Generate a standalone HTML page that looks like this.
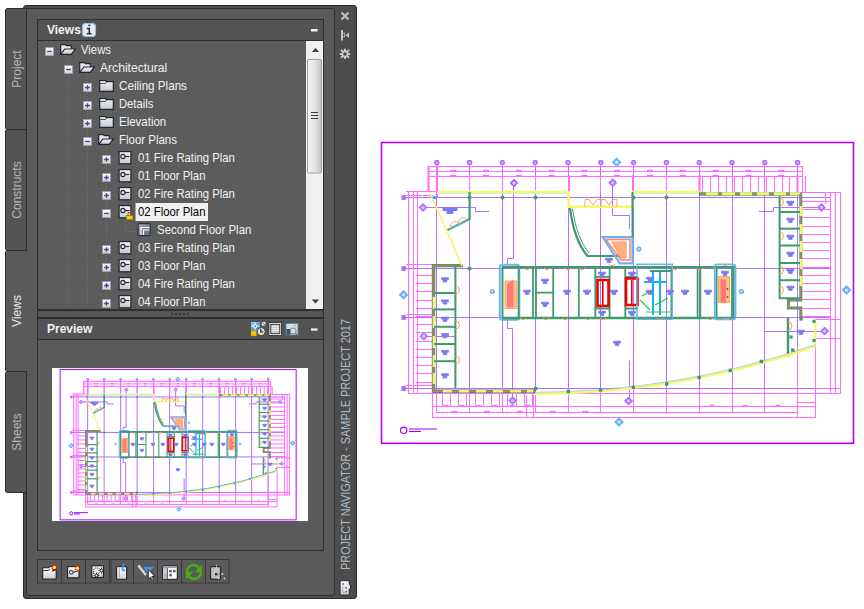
<!DOCTYPE html>
<html><head><meta charset="utf-8">
<style>
*{margin:0;padding:0;box-sizing:border-box}
html,body{width:864px;height:609px;background:#fff;overflow:hidden;position:relative;font-family:"Liberation Sans",sans-serif}
.a{position:absolute}
#frame{left:23px;top:5px;width:334px;height:594px;background:#4d4d4d;border:1px solid #2c2c2c;border-radius:3px}
.tab{left:5px;width:22px;background:#545454;border:1px solid #2e2e2e;border-right:none;clip-path:polygon(2px 0,100% 0,100% 100%,2px 100%,0 calc(100% - 2px),0 2px)}
.tab span{position:absolute;left:50%;top:50%;transform:translate(-50%,-50%) rotate(-90deg);color:#b4b4b4;font-size:12px;white-space:nowrap}
#inner{left:26px;top:8px;width:309px;height:588px;background:#5a5a5a;border:1px solid #2e2e2e;border-radius:3px}
.hdr{background:#535353;border:1px solid #2e2e2e;color:#f2f2f2;font-weight:bold;font-size:12px}
#tree{left:37px;top:41px;width:287px;height:269px;background:#5c5c5c;border:1px solid #2e2e2e;border-top:none;overflow:hidden}
</style></head><body>
<div class="a" id="frame"></div>
<div class="a tab" style="top:8px;height:122px"><span>Project</span></div>
<div class="a tab" style="top:129px;height:122px"><span>Constructs</span></div>
<div class="a tab" style="top:371px;height:122px"><span>Sheets</span></div>
<div class="a" id="inner"></div>
<div class="a tab" style="top:250px;height:122px;background:#5a5a5a;width:22px"><span style="color:#e8e8e8">Views</span></div>
<div class="a" style="left:26px;top:251px;width:2px;height:120px;background:#5a5a5a"></div>
<div class="a hdr" style="left:37px;top:19px;width:287px;height:22px"><span class="a" style="left:9px;top:3px">Views</span></div>
<div class="a" id="tree"></div>
<div class="a" style="left:37px;top:309px;width:287px;height:10px;background:#555;border:1px solid #2e2e2e;border-width:2px 1px 2px 1px"></div>
<div class="a hdr" style="left:37px;top:318px;width:287px;height:22px"><span class="a" style="left:9px;top:3px">Preview</span></div>
<div class="a" style="left:37px;top:339px;width:287px;height:212px;border:1px solid #2e2e2e;border-top:none"></div>
<svg class="a" style="left:0;top:0" width="864" height="609" font-family="Liberation Sans" font-size="12" fill="#f2f2f2">
<defs>
<linearGradient id="gx" x1="0" y1="0" x2="0" y2="1"><stop offset="0" stop-color="#fbfbfb"/><stop offset="1" stop-color="#d2d2d2"/></linearGradient>
<linearGradient id="gf" x1="0" y1="0" x2="0" y2="1"><stop offset="0" stop-color="#f4f5f8"/><stop offset="1" stop-color="#c4c8d2"/></linearGradient>
<linearGradient id="gp" x1="0" y1="0" x2="1" y2="1"><stop offset="0" stop-color="#a9b0bc"/><stop offset="1" stop-color="#5d6572"/></linearGradient>
<clipPath id="ctree"><rect x="38" y="41" width="268" height="268"/></clipPath>
<g id="xp"><rect x="0.5" y="0.5" width="8" height="8" fill="url(#gx)" stroke="#a0a0a0"/><path d="M2.2,4.5H6.8M4.5,2.2V6.8" stroke="#2c47a8" stroke-width="1.3"/></g>
<g id="xm"><rect x="0.5" y="0.5" width="8" height="8" fill="url(#gx)" stroke="#a0a0a0"/><path d="M2.2,4.5H6.8" stroke="#2c47a8" stroke-width="1.3"/></g>
<g id="fo"><path d="M0.7,10.3V0.7H5.3L6.3,1.7H11.3V4.3" fill="#e6e8ee" stroke="#23262c" stroke-width="1.2"/><path d="M0.7,10.3L4.8,5H15.3L11.2,10.3Z" fill="url(#gf)" stroke="#23262c" stroke-width="1.2"/></g>
<g id="fc"><path d="M0.7,11.3V0.7H6.3L7.3,1.7H14.3V11.3Z" fill="url(#gf)" stroke="#23262c" stroke-width="1.2"/><path d="M1.3,3.3H6.5L7.5,2.5" stroke="#23262c" stroke-width="1" fill="none"/><path d="M1.5,2H6" stroke="#fff" stroke-width="1"/></g>
<g id="vw"><rect x="0.6" y="0.6" width="11.8" height="12.2" fill="url(#gf)" stroke="#23262c" stroke-width="1.2"/><circle cx="4.4" cy="5.5" r="2.1" fill="none" stroke="#23262c" stroke-width="1.1"/><path d="M6.5,5.5H10.8" stroke="#23262c" stroke-width="1.1"/></g>
<g id="lk"><path d="M2,4V2.5A1.6,1.6 0 0 1 5.2,2.5V4" fill="none" stroke="#8a6d2c" stroke-width="1.1"/><rect x="0.5" y="4" width="6.4" height="4.2" fill="#f1d21a" stroke="#9a7a10" stroke-width="0.8"/></g>
<g id="pl"><rect x="0.6" y="0.6" width="12.2" height="12" rx="1" fill="url(#gp)" stroke="#2c3038" stroke-width="1.1"/><path d="M3.5,12V4.5H12M6,12V7H12" stroke="#fff" stroke-width="1.1" fill="none"/></g>
</defs>

<g clip-path="url(#ctree)">
<path d="M68.5,57V310 M87.5,75V310 M106.5,147V310 M125.5,222V231.5H137 M54.5,51.5H60 M73.5,69.5H79 M92.5,87.5H98 M92.5,105.5H98 M92.5,123.5H98 M92.5,141.5H98 M111.5,159.5H117 M111.5,177.5H117 M111.5,195.5H117 M111.5,213.5H117 M111.5,249.5H117 M111.5,267.5H117 M111.5,285.5H117 M111.5,303.5H117" stroke="#767676" stroke-width="1" stroke-dasharray="1 2" fill="none"/>
<use href="#xm" x="45" y="47.0"/>
<use href="#fo" x="60" y="44.0"/>
<text transform="translate(81,54.0) scale(0.944,1)">Views</text>
<use href="#xm" x="64" y="65.0"/>
<use href="#fo" x="79" y="62.0"/>
<text transform="translate(100,72.0) scale(1.01,1)">Architectural</text>
<use href="#xp" x="83" y="83.0"/>
<use href="#fc" x="99" y="80.0"/>
<text transform="translate(119,90.0) scale(0.971,1)">Ceiling Plans</text>
<use href="#xp" x="83" y="101.0"/>
<use href="#fc" x="99" y="98.0"/>
<text transform="translate(119,108.0) scale(0.934,1)">Details</text>
<use href="#xp" x="83" y="119.0"/>
<use href="#fc" x="99" y="116.0"/>
<text transform="translate(119,126.0) scale(0.957,1)">Elevation</text>
<use href="#xm" x="83" y="137.0"/>
<use href="#fo" x="98" y="134.0"/>
<text transform="translate(119,144.0) scale(0.956,1)">Floor Plans</text>
<use href="#xp" x="102" y="155.0"/>
<use href="#vw" x="118.5" y="151.0"/>
<text transform="translate(138,162.0) scale(0.945,1)">01 Fire Rating Plan</text>
<use href="#xp" x="102" y="173.0"/>
<use href="#vw" x="118.5" y="169.0"/>
<text transform="translate(138,180.0) scale(0.946,1)">01 Floor Plan</text>
<use href="#xp" x="102" y="191.0"/>
<use href="#vw" x="118.5" y="187.0"/>
<text transform="translate(138,198.0) scale(0.945,1)">02 Fire Rating Plan</text>
<use href="#xm" x="102" y="209.0"/>
<use href="#vw" x="118.5" y="205.0"/>
<use href="#lk" x="126" y="211.5"/>
<rect x="135.5" y="203" width="72.5" height="18" fill="#f0f0f0"/>
<text transform="translate(138,216.0) scale(0.946,1)" fill="#000">02 Floor Plan</text>
<use href="#pl" x="137.5" y="223.0"/>
<text transform="translate(157,234.0) scale(0.957,1)">Second Floor Plan</text>
<use href="#xp" x="102" y="245.0"/>
<use href="#vw" x="118.5" y="241.0"/>
<text transform="translate(138,252.0) scale(0.945,1)">03 Fire Rating Plan</text>
<use href="#xp" x="102" y="263.0"/>
<use href="#vw" x="118.5" y="259.0"/>
<text transform="translate(138,270.0) scale(0.946,1)">03 Floor Plan</text>
<use href="#xp" x="102" y="281.0"/>
<use href="#vw" x="118.5" y="277.0"/>
<text transform="translate(138,288.0) scale(0.945,1)">04 Fire Rating Plan</text>
<use href="#xp" x="102" y="299.0"/>
<use href="#vw" x="118.5" y="295.0"/>
<text transform="translate(138,306.0) scale(0.946,1)">04 Floor Plan</text>
</g>
<!-- info icon -->
<rect x="82.5" y="23.5" width="13" height="13" rx="3" fill="#e8ecf2" stroke="#8cc0ee" stroke-width="1.2"/>
<path d="M86.8,28.6H89.3V33.4M86.6,33.7H91.6" stroke="#2a2a2a" stroke-width="1.5" fill="none"/><rect x="88.4" y="24.6" width="1.8" height="1.7" fill="#2a2a2a"/>
<!-- header minimize -->
<rect x="311" y="29" width="6.5" height="2.5" fill="#f0f0f0"/>
<rect x="311" y="328.4" width="6.5" height="2.2" fill="#f0f0f0"/>
<!-- scrollbar -->
<rect x="306" y="41" width="17" height="268" fill="#f0f0f0"/>
<path d="M311.8,52L315.5,48L319.2,52Z" fill="#404040"/>
<path d="M311.8,299.5L315.5,303.5L319.2,299.5Z" fill="#404040"/>
<linearGradient id="gth" x1="0" x2="1"><stop offset="0" stop-color="#f4f4f4"/><stop offset="0.5" stop-color="#e6e6e6"/><stop offset="1" stop-color="#c2c2c2"/></linearGradient>
<rect x="307.5" y="59.5" width="14" height="113.5" rx="1.5" fill="url(#gth)" stroke="#a0a0a0"/>
<path d="M311,112.5H318M311,115.5H318M311,118.5H318" stroke="#3c3c3c" stroke-width="1"/>
<!-- splitter dots -->
<g fill="#333"><rect x="171" y="313" width="2" height="2"/><rect x="175" y="313" width="2" height="2"/><rect x="179" y="313" width="2" height="2"/><rect x="183" y="313" width="2" height="2"/><rect x="187" y="313" width="2" height="2"/></g>
<!-- right strip icons -->
<path d="M341.5,12.5L348.5,19.5M348.5,12.5L341.5,19.5" stroke="#c4c4c4" stroke-width="2"/>
<path d="M342,30V40.5" stroke="#c4c4c4" stroke-width="2"/><path d="M343,33.5L344.5,33V37L343,36.5" stroke="#c4c4c4" stroke-width="0.8" fill="none"/>
<path d="M349,32.5V38L345.5,35.2Z" fill="#c4c4c4"/>
<g stroke="#c8c8c8" stroke-width="2"><path d="M345,48.8V59M339.8,53.9H350.1M341,49.9L349,57.9M349,49.9L341,57.9"/></g>
<circle cx="345" cy="53.9" r="2.6" fill="#4d4d4d" stroke="#c8c8c8" stroke-width="1.7"/>
<text transform="translate(349.8,570) rotate(-90) scale(0.873,1)" fill="#aebac4" font-size="12.5">PROJECT NAVIGATOR - SAMPLE PROJECT 2017</text>

<!-- toolbar -->
<rect x="37.5" y="559.5" width="24" height="23.5" fill="none" stroke="#3a3a3a"/>
<rect x="61.5" y="559.5" width="24" height="23.5" fill="none" stroke="#3a3a3a"/>
<rect x="85.5" y="559.5" width="24" height="23.5" fill="none" stroke="#3a3a3a"/>
<rect x="111" y="559.5" width="22.5" height="23.5" fill="none" stroke="#3a3a3a"/>
<rect x="133.5" y="559.5" width="24" height="23.5" fill="none" stroke="#3a3a3a"/>
<rect x="157.5" y="559.5" width="24" height="23.5" fill="none" stroke="#3a3a3a"/>
<rect x="181.5" y="559.5" width="24" height="23.5" fill="none" stroke="#3a3a3a"/>
<rect x="205.5" y="559.5" width="23.5" height="23.5" fill="none" stroke="#3a3a3a"/>
<defs><linearGradient id="gi" x1="0" y1="0" x2="0" y2="1"><stop offset="0" stop-color="#ffffff"/><stop offset="1" stop-color="#cfd3dc"/></linearGradient>
<g id="star"><path d="M0,-3.8L0.9,-1.5L3.4,-2.2L1.8,0L3.4,2.2L0.9,1.5L0,3.8L-0.9,1.5L-3.4,2.2L-1.8,0L-3.4,-2.2L-0.9,-1.5Z" fill="#f02000"/><circle r="1.7" fill="#ffe060"/></g></defs>
<!-- b1 folder new -->
<path d="M42.7,579V567.8H48.5L49.5,566.8H53V571L56.2,569V579Z" fill="url(#gi)" stroke="#1e2024" stroke-width="1.1"/>
<path d="M43.2,570.5H48.2L50,569" stroke="#1e2024" stroke-width="0.9" fill="none"/>
<use href="#star" x="54.4" y="567.4"/>
<!-- b2 view new -->
<rect x="67.6" y="566.6" width="11.4" height="11.2" fill="url(#gi)" stroke="#1e2024" stroke-width="1.1"/>
<circle cx="71.3" cy="572.3" r="1.9" fill="#ddd" stroke="#23262c" stroke-width="1"/><path d="M73.2,572.3L77.5,571" stroke="#23262c" stroke-width="1"/>
<use href="#star" x="77.4" y="568.3"/>
<!-- b3 -->
<rect x="91.8" y="565.8" width="11.6" height="11.6" fill="url(#gi)" stroke="#1e2024" stroke-width="1.1"/>
<path d="M93.5,574V570A2,2 0 0 1 95.5,568H99M96,575H99" stroke="#333" stroke-width="0.9" stroke-dasharray="1.2 0.8" fill="none"/>
<g stroke="#222" stroke-width="0.9"><path d="M101.5,567.5V573.5M98.5,570.5H104.5M99.4,568.4L103.6,572.6M103.6,568.4L99.4,572.6"/><path d="M96.5,572.5V578.5M93.5,575.5H99.5M94.4,573.4L98.6,577.6M98.6,573.4L94.4,577.6"/></g>
<circle cx="101.5" cy="570.5" r="1" fill="#fff"/><circle cx="96.5" cy="575.5" r="1" fill="#fff"/>
<!-- b4 -->
<rect x="116.6" y="566.8" width="10" height="12.4" rx="0.5" fill="url(#gi)" stroke="#1e2024" stroke-width="1.1"/>
<path d="M119.5,567.5V579" stroke="#aaa" stroke-width="0.8"/><path d="M117.5,569H126" stroke="#bbb" stroke-width="0.6"/>
<path d="M125,564.5H122.8V570.5H125" stroke="#3c8ef0" stroke-width="1.4" fill="none"/>
<!-- b5 -->
<path d="M138.5,565.5L146,575" stroke="#f0f0f0" stroke-width="2.2"/><path d="M139.5,566L147,575.5" stroke="#888" stroke-width="0.6"/>
<path d="M143.5,567H154L148,573Z" fill="#4a90f0"/>
<path d="M148.3,569.5V579.2L150.5,577L152.3,580.2L153.6,579.5L151.8,576.4H154.8Z" fill="#fff" stroke="#111" stroke-width="0.8"/>
<!-- b6 -->
<rect x="162.7" y="565.7" width="14.6" height="13.6" rx="1" fill="#fff" stroke="#1e2024" stroke-width="1.1"/>
<rect x="163.3" y="566.3" width="13.4" height="1.6" fill="#8a94a6"/>
<rect x="163.5" y="568.3" width="3.6" height="10.5" fill="#b8bec8"/><path d="M167.4,568V579" stroke="#333" stroke-width="0.8"/>
<rect x="169.2" y="569.8" width="2.6" height="2.6" fill="#666"/><rect x="173" y="569.8" width="2.6" height="2.6" fill="#666"/><rect x="169.2" y="573.8" width="2.6" height="2.6" fill="#666"/>
<path d="M164.2,570.8H166.4M164.2,572.8H166.4" stroke="#fff" stroke-width="0.7"/>
<!-- b7 refresh -->
<path d="M187,572A6.5,6.5 0 0 1 199.5,569.2" stroke="#46ae10" stroke-width="2.6" fill="none"/>
<path d="M201.8,564.8V572.2H194.4Z" fill="#46ae10"/>
<path d="M200.8,572A6.5,6.5 0 0 1 188.3,574.8" stroke="#46ae10" stroke-width="2.6" fill="none"/>
<path d="M185.9,579.2V571.8H193.3Z" fill="#46ae10"/>
<!-- b8 -->
<rect x="210.6" y="566.6" width="9.8" height="12.5" rx="0.8" fill="#c4c4c4" stroke="#262626" stroke-width="1.1"/>
<path d="M213,567V579M216,567V579" stroke="#a8a8a8" stroke-width="0.6"/>
<path d="M216.5,564.6V569" stroke="#bbb" stroke-width="0.8" fill="none"/>
<rect x="215" y="573" width="2.4" height="2.4" fill="#333"/><path d="M217.5,574H221" stroke="#555" stroke-width="0.6"/>
<circle cx="222.4" cy="574" r="0.9" fill="#ddd"/><circle cx="224.4" cy="578.4" r="0.9" fill="#ddd"/><circle cx="218.4" cy="578.4" r="0.9" fill="#ddd"/>
<!-- bottom strip icon -->
<path d="M340.1,580.7H349.2V584.6H350.6V589H349.2V595H340.1Z" fill="url(#gi)" stroke="#262830" stroke-width="1"/>
<rect x="342.4" y="583.3" width="1.4" height="1.4" fill="#333"/><rect x="345.4" y="587.1" width="1.4" height="1.4" fill="#333"/><rect x="345.4" y="591.1" width="1.4" height="1.4" fill="#333"/>
<path d="M342.8,586V592.3H344.5" stroke="#777" stroke-width="0.5" fill="none"/>

<!-- preview header icons -->
<linearGradient id="gbl" x1="0" y1="0" x2="1" y2="1"><stop offset="0" stop-color="#9ccaf2"/><stop offset="1" stop-color="#2f78c4"/></linearGradient>
<rect x="251" y="322" width="9" height="8.5" fill="url(#gbl)"/>
<circle cx="255.2" cy="326.2" r="1.7" fill="none" stroke="#f4faff" stroke-width="1"/><path d="M251.5,326.2H253.5M257,326.2H259.5M255.2,322.5V324.5M255.2,328V330" stroke="#f4faff" stroke-width="0.9"/>
<rect x="251" y="330.5" width="5.5" height="5.5" fill="#f0c020" stroke="#b88a00" stroke-width="0.5"/>
<rect x="261.8" y="322" width="3.6" height="3.6" fill="#f2f2f2"/><path d="M262.3,322.5L265,325.2" stroke="#333" stroke-width="0.8"/>
<circle cx="261.2" cy="331.6" r="4" fill="#e6e6e6" stroke="#3a3a3a" stroke-width="0.9"/><path d="M260.8,329V332H263.4" stroke="#111" stroke-width="1.2" fill="none"/>
<rect x="269" y="322.5" width="12.5" height="13" fill="#fff" stroke="#2a2a2a" stroke-width="0.8"/><rect x="270.8" y="324.3" width="9" height="9.4" fill="#ccc" stroke="#333" stroke-width="1"/><path d="M271.5,326.5H279M271.5,328.5H279M271.5,330.5H279" stroke="#eee" stroke-width="0.8"/>
<rect x="286" y="323.5" width="12" height="11.5" fill="#c4e0f6" stroke="#6a7a90" stroke-width="0.8"/><rect x="286.5" y="329" width="3.8" height="5.8" fill="#3c4a64"/><circle cx="293.2" cy="331" r="3" fill="#dcdcdc" stroke="#7a7a7a" stroke-width="0.9"/><path d="M295.4,333.2L298.6,336.4" stroke="#6a7080" stroke-width="1.3"/><circle cx="294.8" cy="325.6" r="1.1" fill="#f0b820"/>
<g id="plan">
<rect x="381.5" y="142.5" width="472" height="300.8" fill="none" stroke="#b400ff" stroke-width="1.6"/>
<path d="M436.5,164V389 M469.5,164V389 M502.5,164V389 M535.5,164V389 M568.5,164V389 M600.5,164V389 M633.5,164V389 M666.5,164V389 M699.5,164V389 M732.5,164V389 M764.5,164V389 M797.5,164V389 M404,197.5H830 M404,268.5H830 M404,317.5H830 M404,388.5H830 M513.5,183V258.5H507.5V265M507.5,320V328.5H512.5V400.6 M423,207.5H475.5V211.5H489 M821,207.5H773.5V211.5H759 M423.7,336.5H455 M764.5,331.5H824.6 M629.5,360.6V401 M612.5,183V215.5H629.5V229" stroke="#b070ff" stroke-width="1" fill="none"/>
<path d="M428.5,166.5H802.5 M428.5,171.5H802.5 M428.5,176.5H802.5 M428.5,166V191.5 M436.5,175V192 M469.5,175V192 M502.5,175V192 M535.5,175V192 M568.5,175V192 M600.5,175V192 M633.5,175V192 M666.5,175V192 M699.5,175V192 M732.5,175V192 M764.5,175V192 M797.5,175V192 M702.5,176V192 M710.5,176V192 M718.5,176V192 M726.5,176V192 M734.5,176V192 M742.5,176V192 M750.5,176V192 M758.5,176V192 M766.5,176V192 M774.5,176V192 M782.5,176V192 M789.5,176V192 M797.5,176V192 M805.5,176V192 M802.5,166V192 M406,191.5H437 M408.5,191V393 M413.5,191V393 M417.5,191V393 M408,393.5H433 M415.5,275.5H433 M415.5,283.5H433 M415.5,291.5H433 M415.5,300.5H433 M415.5,308.5H433 M415.5,316.5H433 M415.5,324.5H433 M415.5,332.5H433 M415.5,341.5H433 M415.5,349.5H433 M415.5,357.5H433 M415.5,365.5H433 M415.5,373.5H433 M415.5,382.5H433 M432.5,393.5H840.5 M432.5,406.5H815.5M436,412.5H797.5M432.5,417.5H815.5M797.5,402.5H815.5 M442.5,393V407 M450.5,393V407 M458.5,393V407 M466.5,393V407 M475.5,393V407 M483.5,393V407 M491.5,393V407 M499.5,393V407 M507.5,393V407 M516.5,393V407 M524.5,393V407 M532.5,393V407 M436.5,388V413 M469.5,388V413 M502.5,388V413 M535.5,388V413 M568.5,388V413 M600.5,388V413 M633.5,388V413 M666.5,388V413 M699.5,388V413 M732.5,388V413 M764.5,388V413 M797.5,388V413 M432.5,393V418M436.5,398V412M526.5,395V418M533.5,395V418M797.5,345V418M815.5,346V418 M830.5,192V394 M835.5,192V394 M840.5,192V394 M825.5,192V204M406,195.5H433M406,264.5H437M406,314.5H433M406,385.5H433 M802,192.5H841M815.5,319.5H841M815.5,338.5H841M815.5,388.5H841 M801,201.5H831 M801,209.5H831 M801,217.5H831 M801,226.5H831 M801,234.5H831 M801,242.5H831 M801,250.5H831 M801,258.5H831 M801,267.5H831 M801,275.5H831 M801,283.5H831 M801,291.5H831 M801,299.5H831 M801,308.5H831 M801,316.5H831" stroke="#ff6cff" stroke-width="1" fill="none"/>
<path d="M437,162V197M569,175V192M633,175V192M428.5,166V192M699.5,175V192M797.5,175V192" stroke="#ff6cff" stroke-width="2" fill="none"/>
<path d="M450.2,170.5h6M450.2,175.5h6 M483.0,170.5h6M483.0,175.5h6 M515.8,170.5h6M515.8,175.5h6 M548.6,170.5h6M548.6,175.5h6 M581.4,170.5h6M581.4,175.5h6 M614.2,170.5h6M614.2,175.5h6 M647.0,170.5h6M647.0,175.5h6 M679.8,170.5h6M679.8,175.5h6 M712.6,170.5h6M712.6,175.5h6 M745.4,170.5h6M745.4,175.5h6 M778.2,170.5h6M778.2,175.5h6 M451.2,411.5h6 M484.0,411.5h6 M516.8,411.5h6 M549.6,411.5h6 M582.4,411.5h6 M443.5,405.5h5 M459.5,405.5h5 M476.5,405.5h5 M492.5,405.5h5 M509.5,405.5h5 M525.5,405.5h5 M709.5,405.5h5 M742.5,405.5h5 M775.5,405.5h5" stroke="#ff6cff" stroke-width="1.6" fill="none"/>
<circle cx="436.8" cy="162.5" r="2.7" fill="#b070ff"/><circle cx="436.8" cy="162.5" r="1" fill="#dcc4ff"/>
<circle cx="469.6" cy="162.5" r="2.7" fill="#b070ff"/><circle cx="469.6" cy="162.5" r="1" fill="#dcc4ff"/>
<circle cx="502.4" cy="162.5" r="2.7" fill="#b070ff"/><circle cx="502.4" cy="162.5" r="1" fill="#dcc4ff"/>
<circle cx="535.2" cy="162.5" r="2.7" fill="#b070ff"/><circle cx="535.2" cy="162.5" r="1" fill="#dcc4ff"/>
<circle cx="568.0" cy="162.5" r="2.7" fill="#b070ff"/><circle cx="568.0" cy="162.5" r="1" fill="#dcc4ff"/>
<circle cx="600.8" cy="162.5" r="2.7" fill="#b070ff"/><circle cx="600.8" cy="162.5" r="1" fill="#dcc4ff"/>
<circle cx="633.6" cy="162.5" r="2.7" fill="#b070ff"/><circle cx="633.6" cy="162.5" r="1" fill="#dcc4ff"/>
<circle cx="666.4" cy="162.5" r="2.7" fill="#b070ff"/><circle cx="666.4" cy="162.5" r="1" fill="#dcc4ff"/>
<circle cx="699.2" cy="162.5" r="2.7" fill="#b070ff"/><circle cx="699.2" cy="162.5" r="1" fill="#dcc4ff"/>
<circle cx="732.0" cy="162.5" r="2.7" fill="#b070ff"/><circle cx="732.0" cy="162.5" r="1" fill="#dcc4ff"/>
<circle cx="764.8" cy="162.5" r="2.7" fill="#b070ff"/><circle cx="764.8" cy="162.5" r="1" fill="#dcc4ff"/>
<circle cx="797.6" cy="162.5" r="2.7" fill="#b070ff"/><circle cx="797.6" cy="162.5" r="1" fill="#dcc4ff"/>
<path d="M401.5,195.0H405.5L406.5,197.5L405.5,200.0H401.5Z" fill="#b070ff"/>
<path d="M401.5,266.0H405.5L406.5,268.5L405.5,271.0H401.5Z" fill="#b070ff"/>
<path d="M401.5,315.0H405.5L406.5,317.5L405.5,320.0H401.5Z" fill="#b070ff"/>
<path d="M401.5,386.0H405.5L406.5,388.5L405.5,391.0H401.5Z" fill="#b070ff"/>
<path d="M419,207.5L423,203.5L427,207.5L423,211.5Z" fill="#b070ff" stroke="#b070ff"/><circle cx="423" cy="207.5" r="1.6" fill="#e0c0ff"/>
<path d="M510,183L514,179L518,183L514,187Z" fill="#b070ff" stroke="#b070ff"/><circle cx="514" cy="183" r="1.6" fill="#e0c0ff"/>
<path d="M608.7,182.8L612.7,178.8L616.7,182.8L612.7,186.8Z" fill="#b070ff" stroke="#b070ff"/><circle cx="612.7" cy="182.8" r="1.6" fill="#e0c0ff"/>
<path d="M817.4,207.4L821.4,203.4L825.4,207.4L821.4,211.4Z" fill="#b070ff" stroke="#b070ff"/><circle cx="821.4" cy="207.4" r="1.6" fill="#e0c0ff"/>
<path d="M419.7,336.2L423.7,332.2L427.7,336.2L423.7,340.2Z" fill="#b070ff" stroke="#b070ff"/><circle cx="423.7" cy="336.2" r="1.6" fill="#e0c0ff"/>
<path d="M508.6,400.6L512.6,396.6L516.6,400.6L512.6,404.6Z" fill="#b070ff" stroke="#b070ff"/><circle cx="512.6" cy="400.6" r="1.6" fill="#e0c0ff"/>
<path d="M820.6,331.1L824.6,327.1L828.6,331.1L824.6,335.1Z" fill="#b070ff" stroke="#b070ff"/><circle cx="824.6" cy="331.1" r="1.6" fill="#e0c0ff"/>
<path d="M624.5,401L628.5,397L632.5,401L628.5,405Z" fill="#b070ff" stroke="#b070ff"/><circle cx="628.5" cy="401" r="1.6" fill="#e0c0ff"/>
<path d="M399.0,294.8L403.5,290.3L408.0,294.8L403.5,299.3Z" fill="#6ab4f4" stroke="#6ab4f4" stroke-width="0.8"/><circle cx="403.5" cy="294.8" r="1.6" fill="#d6ecff"/>
<path d="M842.0,290L846.5,285.5L851.0,290L846.5,294.5Z" fill="#6ab4f4" stroke="#6ab4f4" stroke-width="0.8"/><circle cx="846.5" cy="290" r="1.6" fill="#d6ecff"/>
<path d="M612.2,162.2L616.7,157.7L621.2,162.2L616.7,166.7Z" fill="#6ab4f4" stroke="#6ab4f4" stroke-width="0.8"/><circle cx="616.7" cy="162.2" r="1.6" fill="#d6ecff"/>
<path d="M614.5,422L619,417.5L623.5,422L619,426.5Z" fill="#6ab4f4" stroke="#6ab4f4" stroke-width="0.8"/><circle cx="619" cy="422" r="1.6" fill="#d6ecff"/>
<circle cx="492.3" cy="291.5" r="2.6" fill="#6ab4f4"/><circle cx="492.3" cy="291.5" r="1" fill="#d6ecff"/>
<circle cx="741.4" cy="291.6" r="2.6" fill="#6ab4f4"/><circle cx="741.4" cy="291.6" r="1" fill="#d6ecff"/>
<circle cx="638.9" cy="249.1" r="2.6" fill="#6ab4f4"/><circle cx="638.9" cy="249.1" r="1" fill="#d6ecff"/>
<path d="M437,192H568.5V206.8H632.5V192H699.5" stroke="#f6f66a" stroke-width="2.4" fill="none"/>
<path d="M437,193.6H568M633,193.6H699" stroke="#b8f0f0" stroke-width="0.8" fill="none"/>
<path d="M699,194H802" stroke="#3f9a6e" stroke-width="3.4" fill="none"/>
<path d="M700,194H802" stroke="#d07a62" stroke-width="1.4" fill="none"/>
<path d="M706,193.8H718M722,193.8H735M740,193.8H752M757,193.8H769M774,193.8H786M790,193.8H800" stroke="#f6f66a" stroke-width="3" fill="none"/>
<path d="M800.8,194V300H788.4V308H800.8V318" stroke="#3f9a6e" stroke-width="3" fill="none"/>
<path d="M800.8,194V300H788.4V308H800.8V318" stroke="#d07a62" stroke-width="1.2" fill="none"/>
<path d="M801,206V216M801,224V234M801,241V252M801,259V269M801,276V286" stroke="#f6f66a" stroke-width="3" fill="none"/>
<path d="M779.6,196V298.3H800.8" stroke="#3f9a6e" stroke-width="2" fill="none"/>
<path d="M779.6,212H800" stroke="#3f9a6e" stroke-width="2" fill="none"/>
<path d="M779.6,228.7H800" stroke="#3f9a6e" stroke-width="2" fill="none"/>
<path d="M779.6,245.5H800" stroke="#3f9a6e" stroke-width="2" fill="none"/>
<path d="M779.6,263H800" stroke="#3f9a6e" stroke-width="2" fill="none"/>
<path d="M779.6,280.2H800" stroke="#3f9a6e" stroke-width="2" fill="none"/>
<path d="M788,318V356.5" stroke="#3f9a6e" stroke-width="2.4" fill="none"/>
<path d="M815.4,320V346" stroke="#f6f66a" stroke-width="2" fill="none"/>
<rect x="812.4" y="319.7" width="3.2" height="3.2" fill="#3f9a6e"/>
<rect x="812.4" y="338.9" width="3.2" height="3.2" fill="#3f9a6e"/>
<rect x="799.4" y="317.4" width="3.2" height="3.2" fill="#3f9a6e"/>
<rect x="789.4" y="335.4" width="3.2" height="3.2" fill="#3f9a6e"/>
<path d="M463,265.6H433.5V391.2H535.6" stroke="#3f9a6e" stroke-width="3.4" fill="none"/>
<path d="M463,265.6H433.5V391.2H535.6" stroke="#d07a62" stroke-width="1.4" fill="none"/>
<path d="M434,297V309M434,316V328M434,336V348M434,355V367M434,373V384" stroke="#f6f66a" stroke-width="2.6" fill="none"/>
<path d="M443,391.2H452M459,391.2H469M476,391.2H486M493,391.2H503M510,391.2H521M527,391.2H533" stroke="#f6f66a" stroke-width="2.6" fill="none"/>
<path d="M455.4,265.6V388" stroke="#3f9a6e" stroke-width="2" fill="none"/>
<path d="M434,293H455.4" stroke="#3f9a6e" stroke-width="2" fill="none"/>
<path d="M434,309.4H455.4" stroke="#3f9a6e" stroke-width="2" fill="none"/>
<path d="M434,326.8H455.4" stroke="#3f9a6e" stroke-width="2" fill="none"/>
<path d="M434,344H455.4" stroke="#3f9a6e" stroke-width="2" fill="none"/>
<path d="M434,361.2H455.4" stroke="#3f9a6e" stroke-width="2" fill="none"/>
<path d="M535,393.8Q680,393.3 815.6,346" stroke="#f6f66a" stroke-width="2.4" fill="none"/>
<path d="M535,392.3Q680,391.8 815.6,344.5" stroke="#6ab4f4" stroke-width="0.6" fill="none"/>
<rect x="533.9" y="386.8" width="3.4" height="3.4" fill="#3f9a6e"/>
<rect x="566.5999999999999" y="389.8" width="3.4" height="3.4" fill="#3f9a6e"/>
<rect x="598.9" y="388.3" width="3.4" height="3.4" fill="#3f9a6e"/>
<rect x="631.5999999999999" y="385.6" width="3.4" height="3.4" fill="#3f9a6e"/>
<rect x="665.0" y="382.2" width="3.4" height="3.4" fill="#3f9a6e"/>
<rect x="697.5" y="375.8" width="3.4" height="3.4" fill="#3f9a6e"/>
<rect x="728.5999999999999" y="368.7" width="3.4" height="3.4" fill="#3f9a6e"/>
<rect x="759.6999999999999" y="359.7" width="3.4" height="3.4" fill="#3f9a6e"/>
<rect x="791.0999999999999" y="348.40000000000003" width="3.4" height="3.4" fill="#3f9a6e"/>
<rect x="467.8" y="195.8" width="3.4" height="3.4" fill="#3f9a6e"/>
<rect x="500.8" y="195.8" width="3.4" height="3.4" fill="#3f9a6e"/>
<rect x="533.8" y="195.8" width="3.4" height="3.4" fill="#3f9a6e"/>
<rect x="631.8" y="195.8" width="3.4" height="3.4" fill="#3f9a6e"/>
<rect x="664.8" y="195.8" width="3.4" height="3.4" fill="#3f9a6e"/>
<rect x="467.8" y="266.8" width="3.4" height="3.4" fill="#3f9a6e"/>
<path d="M429.4,192L462,265.6" stroke="#f6f66a" stroke-width="1.6" fill="none"/>
<path d="M469.6,192V219L447.5,230" stroke="#3f9a6e" stroke-width="2.2" fill="none"/>
<path d="M449,229L468,220" stroke="#6ab4f4" stroke-width="1.2" fill="none"/>
<path d="M451,228A4,4 0 0 1 459,224M459,224A4,4 0 0 1 467,220" stroke="#ffa35a" stroke-width="1" fill="none"/>
<path d="M443,208H457V210.5H453V213.5H447V210.5H443Z" stroke="#7a78f4" stroke-width="1" fill="#7a78f4"/>
<circle cx="434.5" cy="197.5" r="1.8" fill="#20a0ff"/>
<path d="M570,208Q574,240 587.5,256H620" stroke="#3f9a6e" stroke-width="2.2" fill="none"/>
<path d="M572.5,209Q576.5,238 589,253" stroke="#3f9a6e" stroke-width="1" fill="none"/>
<path d="M585,207V199.5H589L593,205L597,199.5H601V207M601,199.5H605L609,205L613,199.5H617V207" stroke="#ffa35a" stroke-width="1" fill="none"/>
<rect x="499.8" y="264.8" width="19.5" height="54.9" rx="2.5" fill="none" stroke="#6ab4f4" stroke-width="2"/>
<path d="M502,267.3H735M502,318H735" stroke="#3f9a6e" stroke-width="2.6" fill="none"/>
<path d="M502.5,267V318" stroke="#3f9a6e" stroke-width="2" fill="none"/>
<path d="M518.6,267V318" stroke="#3f9a6e" stroke-width="1.8" fill="none"/>
<path d="M533,267V318" stroke="#3f9a6e" stroke-width="1.8" fill="none"/>
<path d="M536,267V318" stroke="#3f9a6e" stroke-width="1.8" fill="none"/>
<path d="M553.2,267V318" stroke="#3f9a6e" stroke-width="1.8" fill="none"/>
<path d="M578.8,267V318" stroke="#3f9a6e" stroke-width="1.8" fill="none"/>
<path d="M595.3,267V318" stroke="#3f9a6e" stroke-width="1.8" fill="none"/>
<path d="M609.6,267V318" stroke="#3f9a6e" stroke-width="1.8" fill="none"/>
<path d="M625.3,267V318" stroke="#3f9a6e" stroke-width="1.8" fill="none"/>
<path d="M671.4,267V318" stroke="#3f9a6e" stroke-width="1.8" fill="none"/>
<path d="M697.6,267V318" stroke="#3f9a6e" stroke-width="1.8" fill="none"/>
<path d="M700.3,267V318" stroke="#3f9a6e" stroke-width="1.8" fill="none"/>
<path d="M716.6,267V318" stroke="#3f9a6e" stroke-width="1.8" fill="none"/>
<path d="M732,267V318" stroke="#3f9a6e" stroke-width="1.8" fill="none"/>
<path d="M733.7,267V318" stroke="#3f9a6e" stroke-width="1.8" fill="none"/>
<path d="M536,292.7H553.2M595.3,276.9H609.6M595.3,308.5H609.6M625.3,276.9H638M625.3,308.5H638M650,271H671" stroke="#3f9a6e" stroke-width="1.8" fill="none"/>
<path d="M597.5,280H608.5V306H597.5Z" stroke="#f00000" stroke-width="2.6" fill="none"/>
<path d="M602.8,281V305" stroke="#f00000" stroke-width="1.6" fill="none"/>
<path d="M626,278.5H637.5V305H626Z" stroke="#f00000" stroke-width="2.6" fill="none"/>
<path d="M631.8,280V304" stroke="#f00000" stroke-width="1.6" fill="none"/>
<path d="M505,281H517V308.5H505Z" stroke="#ffa35a" stroke-width="1" fill="#ffc090"/>
<path d="M507.5,284L513,280.5V307H507.5Z" stroke="#ff7a7a" stroke-width="1" fill="#ff7a7a"/>
<path d="M718.5,276.5H729.5V302.5H718.5Z" stroke="#ffa35a" stroke-width="1" fill="#ffc090"/>
<path d="M721,280H725.5V302H721Z" stroke="#ff7a7a" stroke-width="1" fill="#ff7a7a"/>
<path d="M727.5,288V290M727.5,296V298" stroke="#a05020" stroke-width="1.5" fill="none"/>
<rect x="714.8" y="264.3" width="20.7" height="55.1" rx="2.5" fill="none" stroke="#6ab4f4" stroke-width="1.8"/>
<path d="M637,264.3H672.3V319.4H637Z" stroke="#6ab4f4" stroke-width="1.4" fill="none"/>
<path d="M602.7,237.2H632.5V263.4H619.9Z" stroke="#6ab4f4" stroke-width="2.2" fill="none"/>
<path d="M606,239.5H630V260H621Z" stroke="#ff7a7a" stroke-width="1.4" fill="none"/>
<path d="M612,242H626V258H621Z" stroke="#ffa35a" stroke-width="1.2" fill="#ffb080"/>
<path d="M632.5,192V237" stroke="#3f9a6e" stroke-width="2" fill="none"/>
<path d="M653,272V315M660,272V315M644,282H666" stroke="#16b0f0" stroke-width="2" fill="none"/>
<path d="M640,300L650,310M655,305L668,298M646,312H670M642,296L652,290" stroke="#1ed040" stroke-width="1.2" fill="none"/>
<path d="M524,268A3.5,3.5 0 0 0 530,268" stroke="#ffa35a" stroke-width="1" fill="none"/>
<path d="M544,268A3.5,3.5 0 0 0 550,268" stroke="#ffa35a" stroke-width="1" fill="none"/>
<path d="M565,268A3.5,3.5 0 0 0 571,268" stroke="#ffa35a" stroke-width="1" fill="none"/>
<path d="M579,268A3.5,3.5 0 0 0 585,268" stroke="#ffa35a" stroke-width="1" fill="none"/>
<path d="M657,318A3.5,3.5 0 0 0 663,318" stroke="#ffa35a" stroke-width="1" fill="none"/>
<path d="M697,268A3.5,3.5 0 0 0 703,268" stroke="#ffa35a" stroke-width="1" fill="none"/>
<path d="M707,318A3.5,3.5 0 0 0 713,318" stroke="#ffa35a" stroke-width="1" fill="none"/>
<path d="M723,318A3.5,3.5 0 0 0 729,318" stroke="#ffa35a" stroke-width="1" fill="none"/>
<path d="M585,318A3.5,3.5 0 0 0 591,318" stroke="#ffa35a" stroke-width="1" fill="none"/>
<path d="M600,318A3.5,3.5 0 0 0 606,318" stroke="#ffa35a" stroke-width="1" fill="none"/>
<path d="M543,318A3.5,3.5 0 0 0 549,318" stroke="#ffa35a" stroke-width="1" fill="none"/>
<path d="M562,318A3.5,3.5 0 0 0 568,318" stroke="#ffa35a" stroke-width="1" fill="none"/>
<path d="M520,318A3.5,3.5 0 0 0 526,318" stroke="#ffa35a" stroke-width="1" fill="none"/>
<path d="M672,268A3.5,3.5 0 0 0 678,268" stroke="#ffa35a" stroke-width="1" fill="none"/>
<path d="M722,264A3.5,3.5 0 0 0 728,264" stroke="#ffa35a" stroke-width="1" fill="none"/>
<path d="M609,264A3.5,3.5 0 0 0 615,264" stroke="#ffa35a" stroke-width="1" fill="none"/>
<path d="M541.5,279.2H548.5V281H546.8V283.4H543.2V281H541.5Z" stroke="#7a78f4" stroke-width="0.8" fill="#7a78f4"/>
<path d="M541.5,302.2H548.5V304H546.8V306.4H543.2V304H541.5Z" stroke="#7a78f4" stroke-width="0.8" fill="#7a78f4"/>
<path d="M523.5,290.2H530.5V292H528.8V294.4H525.2V292H523.5Z" stroke="#7a78f4" stroke-width="0.8" fill="#7a78f4"/>
<path d="M563.5,290.2H570.5V292H568.8V294.4H565.2V292H563.5Z" stroke="#7a78f4" stroke-width="0.8" fill="#7a78f4"/>
<path d="M583.5,290.2H590.5V292H588.8V294.4H585.2V292H583.5Z" stroke="#7a78f4" stroke-width="0.8" fill="#7a78f4"/>
<path d="M598.5,272.2H605.5V274H603.8V276.4H600.2V274H598.5Z" stroke="#7a78f4" stroke-width="0.8" fill="#7a78f4"/>
<path d="M598.5,311.2H605.5V313H603.8V315.4H600.2V313H598.5Z" stroke="#7a78f4" stroke-width="0.8" fill="#7a78f4"/>
<path d="M628.5,272.2H635.5V274H633.8V276.4H630.2V274H628.5Z" stroke="#7a78f4" stroke-width="0.8" fill="#7a78f4"/>
<path d="M628.5,311.2H635.5V313H633.8V315.4H630.2V313H628.5Z" stroke="#7a78f4" stroke-width="0.8" fill="#7a78f4"/>
<path d="M610.5,290.2H617.5V292H615.8V294.4H612.2V292H610.5Z" stroke="#7a78f4" stroke-width="0.8" fill="#7a78f4"/>
<path d="M646.5,277.2H653.5V279H651.8V281.4H648.2V279H646.5Z" stroke="#7a78f4" stroke-width="0.8" fill="#7a78f4"/>
<path d="M646.5,290.2H653.5V292H651.8V294.4H648.2V292H646.5Z" stroke="#7a78f4" stroke-width="0.8" fill="#7a78f4"/>
<path d="M666.5,290.2H673.5V292H671.8V294.4H668.2V292H666.5Z" stroke="#7a78f4" stroke-width="0.8" fill="#7a78f4"/>
<path d="M681.5,290.2H688.5V292H686.8V294.4H683.2V292H681.5Z" stroke="#7a78f4" stroke-width="0.8" fill="#7a78f4"/>
<path d="M704.5,290.2H711.5V292H709.8V294.4H706.2V292H704.5Z" stroke="#7a78f4" stroke-width="0.8" fill="#7a78f4"/>
<path d="M721.5,271.2H728.5V273H726.8V275.4H723.2V273H721.5Z" stroke="#7a78f4" stroke-width="0.8" fill="#7a78f4"/>
<path d="M613.5,341.2H620.5V343H618.8V345.4H615.2V343H613.5Z" stroke="#7a78f4" stroke-width="0.8" fill="#7a78f4"/>
<path d="M786.9,201.2H793.9V203H792.1999999999999V205.4H788.6V203H786.9Z" stroke="#7a78f4" stroke-width="0.8" fill="#7a78f4"/>
<path d="M786.9,218.2H793.9V220H792.1999999999999V222.4H788.6V220H786.9Z" stroke="#7a78f4" stroke-width="0.8" fill="#7a78f4"/>
<path d="M786.9,235.2H793.9V237H792.1999999999999V239.4H788.6V237H786.9Z" stroke="#7a78f4" stroke-width="0.8" fill="#7a78f4"/>
<path d="M786.9,252.2H793.9V254H792.1999999999999V256.4H788.6V254H786.9Z" stroke="#7a78f4" stroke-width="0.8" fill="#7a78f4"/>
<path d="M786.9,269.2H793.9V271H792.1999999999999V273.4H788.6V271H786.9Z" stroke="#7a78f4" stroke-width="0.8" fill="#7a78f4"/>
<path d="M786.9,286.2H793.9V288H792.1999999999999V290.4H788.6V288H786.9Z" stroke="#7a78f4" stroke-width="0.8" fill="#7a78f4"/>
<path d="M441.5,277.8H448.5V279.6H446.8V282.0H443.2V279.6H441.5Z" stroke="#7a78f4" stroke-width="0.8" fill="#7a78f4"/>
<path d="M441.5,299.9H448.5V301.7H446.8V304.09999999999997H443.2V301.7H441.5Z" stroke="#7a78f4" stroke-width="0.8" fill="#7a78f4"/>
<path d="M441.5,317.2H448.5V319H446.8V321.4H443.2V319H441.5Z" stroke="#7a78f4" stroke-width="0.8" fill="#7a78f4"/>
<path d="M441.5,333.59999999999997H448.5V335.4H446.8V337.79999999999995H443.2V335.4H441.5Z" stroke="#7a78f4" stroke-width="0.8" fill="#7a78f4"/>
<path d="M441.5,350.4H448.5V352.2H446.8V354.59999999999997H443.2V352.2H441.5Z" stroke="#7a78f4" stroke-width="0.8" fill="#7a78f4"/>
<path d="M441.5,373.8H448.5V375.6H446.8V378.0H443.2V375.6H441.5Z" stroke="#7a78f4" stroke-width="0.8" fill="#7a78f4"/>
<path d="M605.5,258.2H612.5V260H610.8V262.4H607.2V260H605.5Z" stroke="#7a78f4" stroke-width="0.8" fill="#7a78f4"/>
<path d="M797.5,330.2H804.5V332H802.8V334.4H799.2V332H797.5Z" stroke="#7a78f4" stroke-width="0.8" fill="#7a78f4"/>
<path d="M455.4,286A4,4 0 0 1 455.4,294" stroke="#ffa35a" stroke-width="1" fill="none"/>
<path d="M455.4,321A4,4 0 0 1 455.4,329" stroke="#ffa35a" stroke-width="1" fill="none"/>
<path d="M455.4,356A4,4 0 0 1 455.4,364" stroke="#ffa35a" stroke-width="1" fill="none"/>
<path d="M779.6,198A4,4 0 0 1 779.6,206" stroke="#ffa35a" stroke-width="1" fill="none"/>
<path d="M779.6,232A4,4 0 0 1 779.6,240" stroke="#ffa35a" stroke-width="1" fill="none"/>
<path d="M779.6,266A4,4 0 0 1 779.6,274" stroke="#ffa35a" stroke-width="1" fill="none"/>
<path d="M779.6,286A4,4 0 0 1 779.6,294" stroke="#ffa35a" stroke-width="1" fill="none"/>
<path d="M788,322A4,4 0 0 1 788,330" stroke="#ffa35a" stroke-width="1" fill="none"/>
<circle cx="403.7" cy="430.3" r="3.2" fill="none" stroke="#a000f8" stroke-width="1.2"/>
<path d="M409,429H437M409,431.5H421" stroke="#a000f8" stroke-width="1.2" fill="none"/>
</g>
<rect x="52" y="368" width="256" height="153" fill="#fff"/>
<clipPath id="cprev"><rect x="52" y="368" width="256" height="153"/></clipPath>
<g clip-path="url(#cprev)"><g transform="translate(-130.6,298.2) scale(0.5)"><rect x="381.5" y="142.5" width="472" height="300.8" fill="none" stroke="#b400ff" stroke-width="2.00"/>
<path d="M436.5,164V389 M469.5,164V389 M502.5,164V389 M535.5,164V389 M568.5,164V389 M600.5,164V389 M633.5,164V389 M666.5,164V389 M699.5,164V389 M732.5,164V389 M764.5,164V389 M797.5,164V389 M404,197.5H830 M404,268.5H830 M404,317.5H830 M404,388.5H830 M513.5,183V258.5H507.5V265M507.5,320V328.5H512.5V400.6 M423,207.5H475.5V211.5H489 M821,207.5H773.5V211.5H759 M423.7,336.5H455 M764.5,331.5H824.6 M629.5,360.6V401 M612.5,183V215.5H629.5V229" stroke="#b070ff" stroke-width="2.00" fill="none"/>
<path d="M428.5,166.5H802.5 M428.5,171.5H802.5 M428.5,176.5H802.5 M428.5,166V191.5 M436.5,175V192 M469.5,175V192 M502.5,175V192 M535.5,175V192 M568.5,175V192 M600.5,175V192 M633.5,175V192 M666.5,175V192 M699.5,175V192 M732.5,175V192 M764.5,175V192 M797.5,175V192 M702.5,176V192 M710.5,176V192 M718.5,176V192 M726.5,176V192 M734.5,176V192 M742.5,176V192 M750.5,176V192 M758.5,176V192 M766.5,176V192 M774.5,176V192 M782.5,176V192 M789.5,176V192 M797.5,176V192 M805.5,176V192 M802.5,166V192 M406,191.5H437 M408.5,191V393 M413.5,191V393 M417.5,191V393 M408,393.5H433 M415.5,275.5H433 M415.5,283.5H433 M415.5,291.5H433 M415.5,300.5H433 M415.5,308.5H433 M415.5,316.5H433 M415.5,324.5H433 M415.5,332.5H433 M415.5,341.5H433 M415.5,349.5H433 M415.5,357.5H433 M415.5,365.5H433 M415.5,373.5H433 M415.5,382.5H433 M432.5,393.5H840.5 M432.5,406.5H815.5M436,412.5H797.5M432.5,417.5H815.5M797.5,402.5H815.5 M442.5,393V407 M450.5,393V407 M458.5,393V407 M466.5,393V407 M475.5,393V407 M483.5,393V407 M491.5,393V407 M499.5,393V407 M507.5,393V407 M516.5,393V407 M524.5,393V407 M532.5,393V407 M436.5,388V413 M469.5,388V413 M502.5,388V413 M535.5,388V413 M568.5,388V413 M600.5,388V413 M633.5,388V413 M666.5,388V413 M699.5,388V413 M732.5,388V413 M764.5,388V413 M797.5,388V413 M432.5,393V418M436.5,398V412M526.5,395V418M533.5,395V418M797.5,345V418M815.5,346V418 M830.5,192V394 M835.5,192V394 M840.5,192V394 M825.5,192V204M406,195.5H433M406,264.5H437M406,314.5H433M406,385.5H433 M802,192.5H841M815.5,319.5H841M815.5,338.5H841M815.5,388.5H841 M801,201.5H831 M801,209.5H831 M801,217.5H831 M801,226.5H831 M801,234.5H831 M801,242.5H831 M801,250.5H831 M801,258.5H831 M801,267.5H831 M801,275.5H831 M801,283.5H831 M801,291.5H831 M801,299.5H831 M801,308.5H831 M801,316.5H831" stroke="#ff6cff" stroke-width="2.00" fill="none"/>
<path d="M437,162V197M569,175V192M633,175V192M428.5,166V192M699.5,175V192M797.5,175V192" stroke="#ff6cff" stroke-width="2.40" fill="none"/>
<path d="M450.2,170.5h6M450.2,175.5h6 M483.0,170.5h6M483.0,175.5h6 M515.8,170.5h6M515.8,175.5h6 M548.6,170.5h6M548.6,175.5h6 M581.4,170.5h6M581.4,175.5h6 M614.2,170.5h6M614.2,175.5h6 M647.0,170.5h6M647.0,175.5h6 M679.8,170.5h6M679.8,175.5h6 M712.6,170.5h6M712.6,175.5h6 M745.4,170.5h6M745.4,175.5h6 M778.2,170.5h6M778.2,175.5h6 M451.2,411.5h6 M484.0,411.5h6 M516.8,411.5h6 M549.6,411.5h6 M582.4,411.5h6 M443.5,405.5h5 M459.5,405.5h5 M476.5,405.5h5 M492.5,405.5h5 M509.5,405.5h5 M525.5,405.5h5 M709.5,405.5h5 M742.5,405.5h5 M775.5,405.5h5" stroke="#ff6cff" stroke-width="2.00" fill="none"/>
<circle cx="436.8" cy="162.5" r="2.7" fill="#b070ff"/><circle cx="436.8" cy="162.5" r="1" fill="#dcc4ff"/>
<circle cx="469.6" cy="162.5" r="2.7" fill="#b070ff"/><circle cx="469.6" cy="162.5" r="1" fill="#dcc4ff"/>
<circle cx="502.4" cy="162.5" r="2.7" fill="#b070ff"/><circle cx="502.4" cy="162.5" r="1" fill="#dcc4ff"/>
<circle cx="535.2" cy="162.5" r="2.7" fill="#b070ff"/><circle cx="535.2" cy="162.5" r="1" fill="#dcc4ff"/>
<circle cx="568.0" cy="162.5" r="2.7" fill="#b070ff"/><circle cx="568.0" cy="162.5" r="1" fill="#dcc4ff"/>
<circle cx="600.8" cy="162.5" r="2.7" fill="#b070ff"/><circle cx="600.8" cy="162.5" r="1" fill="#dcc4ff"/>
<circle cx="633.6" cy="162.5" r="2.7" fill="#b070ff"/><circle cx="633.6" cy="162.5" r="1" fill="#dcc4ff"/>
<circle cx="666.4" cy="162.5" r="2.7" fill="#b070ff"/><circle cx="666.4" cy="162.5" r="1" fill="#dcc4ff"/>
<circle cx="699.2" cy="162.5" r="2.7" fill="#b070ff"/><circle cx="699.2" cy="162.5" r="1" fill="#dcc4ff"/>
<circle cx="732.0" cy="162.5" r="2.7" fill="#b070ff"/><circle cx="732.0" cy="162.5" r="1" fill="#dcc4ff"/>
<circle cx="764.8" cy="162.5" r="2.7" fill="#b070ff"/><circle cx="764.8" cy="162.5" r="1" fill="#dcc4ff"/>
<circle cx="797.6" cy="162.5" r="2.7" fill="#b070ff"/><circle cx="797.6" cy="162.5" r="1" fill="#dcc4ff"/>
<path d="M401.5,195.0H405.5L406.5,197.5L405.5,200.0H401.5Z" fill="#b070ff"/>
<path d="M401.5,266.0H405.5L406.5,268.5L405.5,271.0H401.5Z" fill="#b070ff"/>
<path d="M401.5,315.0H405.5L406.5,317.5L405.5,320.0H401.5Z" fill="#b070ff"/>
<path d="M401.5,386.0H405.5L406.5,388.5L405.5,391.0H401.5Z" fill="#b070ff"/>
<path d="M419,207.5L423,203.5L427,207.5L423,211.5Z" fill="#b070ff" stroke="#b070ff"/><circle cx="423" cy="207.5" r="1.6" fill="#e0c0ff"/>
<path d="M510,183L514,179L518,183L514,187Z" fill="#b070ff" stroke="#b070ff"/><circle cx="514" cy="183" r="1.6" fill="#e0c0ff"/>
<path d="M608.7,182.8L612.7,178.8L616.7,182.8L612.7,186.8Z" fill="#b070ff" stroke="#b070ff"/><circle cx="612.7" cy="182.8" r="1.6" fill="#e0c0ff"/>
<path d="M817.4,207.4L821.4,203.4L825.4,207.4L821.4,211.4Z" fill="#b070ff" stroke="#b070ff"/><circle cx="821.4" cy="207.4" r="1.6" fill="#e0c0ff"/>
<path d="M419.7,336.2L423.7,332.2L427.7,336.2L423.7,340.2Z" fill="#b070ff" stroke="#b070ff"/><circle cx="423.7" cy="336.2" r="1.6" fill="#e0c0ff"/>
<path d="M508.6,400.6L512.6,396.6L516.6,400.6L512.6,404.6Z" fill="#b070ff" stroke="#b070ff"/><circle cx="512.6" cy="400.6" r="1.6" fill="#e0c0ff"/>
<path d="M820.6,331.1L824.6,327.1L828.6,331.1L824.6,335.1Z" fill="#b070ff" stroke="#b070ff"/><circle cx="824.6" cy="331.1" r="1.6" fill="#e0c0ff"/>
<path d="M624.5,401L628.5,397L632.5,401L628.5,405Z" fill="#b070ff" stroke="#b070ff"/><circle cx="628.5" cy="401" r="1.6" fill="#e0c0ff"/>
<path d="M399.0,294.8L403.5,290.3L408.0,294.8L403.5,299.3Z" fill="#6ab4f4" stroke="#6ab4f4" stroke-width="2.00"/><circle cx="403.5" cy="294.8" r="1.6" fill="#d6ecff"/>
<path d="M842.0,290L846.5,285.5L851.0,290L846.5,294.5Z" fill="#6ab4f4" stroke="#6ab4f4" stroke-width="2.00"/><circle cx="846.5" cy="290" r="1.6" fill="#d6ecff"/>
<path d="M612.2,162.2L616.7,157.7L621.2,162.2L616.7,166.7Z" fill="#6ab4f4" stroke="#6ab4f4" stroke-width="2.00"/><circle cx="616.7" cy="162.2" r="1.6" fill="#d6ecff"/>
<path d="M614.5,422L619,417.5L623.5,422L619,426.5Z" fill="#6ab4f4" stroke="#6ab4f4" stroke-width="2.00"/><circle cx="619" cy="422" r="1.6" fill="#d6ecff"/>
<circle cx="492.3" cy="291.5" r="2.6" fill="#6ab4f4"/><circle cx="492.3" cy="291.5" r="1" fill="#d6ecff"/>
<circle cx="741.4" cy="291.6" r="2.6" fill="#6ab4f4"/><circle cx="741.4" cy="291.6" r="1" fill="#d6ecff"/>
<circle cx="638.9" cy="249.1" r="2.6" fill="#6ab4f4"/><circle cx="638.9" cy="249.1" r="1" fill="#d6ecff"/>
<path d="M437,192H568.5V206.8H632.5V192H699.5" stroke="#f6f66a" stroke-width="2.88" fill="none"/>
<path d="M437,193.6H568M633,193.6H699" stroke="#b8f0f0" stroke-width="2.00" fill="none"/>
<path d="M699,194H802" stroke="#3f9a6e" stroke-width="4.08" fill="none"/>
<path d="M700,194H802" stroke="#d07a62" stroke-width="2.00" fill="none"/>
<path d="M706,193.8H718M722,193.8H735M740,193.8H752M757,193.8H769M774,193.8H786M790,193.8H800" stroke="#f6f66a" stroke-width="3.60" fill="none"/>
<path d="M800.8,194V300H788.4V308H800.8V318" stroke="#3f9a6e" stroke-width="3.60" fill="none"/>
<path d="M800.8,194V300H788.4V308H800.8V318" stroke="#d07a62" stroke-width="2.00" fill="none"/>
<path d="M801,206V216M801,224V234M801,241V252M801,259V269M801,276V286" stroke="#f6f66a" stroke-width="3.60" fill="none"/>
<path d="M779.6,196V298.3H800.8" stroke="#3f9a6e" stroke-width="2.40" fill="none"/>
<path d="M779.6,212H800" stroke="#3f9a6e" stroke-width="2.40" fill="none"/>
<path d="M779.6,228.7H800" stroke="#3f9a6e" stroke-width="2.40" fill="none"/>
<path d="M779.6,245.5H800" stroke="#3f9a6e" stroke-width="2.40" fill="none"/>
<path d="M779.6,263H800" stroke="#3f9a6e" stroke-width="2.40" fill="none"/>
<path d="M779.6,280.2H800" stroke="#3f9a6e" stroke-width="2.40" fill="none"/>
<path d="M788,318V356.5" stroke="#3f9a6e" stroke-width="2.88" fill="none"/>
<path d="M815.4,320V346" stroke="#f6f66a" stroke-width="2.40" fill="none"/>
<rect x="812.4" y="319.7" width="3.2" height="3.2" fill="#3f9a6e"/>
<rect x="812.4" y="338.9" width="3.2" height="3.2" fill="#3f9a6e"/>
<rect x="799.4" y="317.4" width="3.2" height="3.2" fill="#3f9a6e"/>
<rect x="789.4" y="335.4" width="3.2" height="3.2" fill="#3f9a6e"/>
<path d="M463,265.6H433.5V391.2H535.6" stroke="#3f9a6e" stroke-width="4.08" fill="none"/>
<path d="M463,265.6H433.5V391.2H535.6" stroke="#d07a62" stroke-width="2.00" fill="none"/>
<path d="M434,297V309M434,316V328M434,336V348M434,355V367M434,373V384" stroke="#f6f66a" stroke-width="3.12" fill="none"/>
<path d="M443,391.2H452M459,391.2H469M476,391.2H486M493,391.2H503M510,391.2H521M527,391.2H533" stroke="#f6f66a" stroke-width="3.12" fill="none"/>
<path d="M455.4,265.6V388" stroke="#3f9a6e" stroke-width="2.40" fill="none"/>
<path d="M434,293H455.4" stroke="#3f9a6e" stroke-width="2.40" fill="none"/>
<path d="M434,309.4H455.4" stroke="#3f9a6e" stroke-width="2.40" fill="none"/>
<path d="M434,326.8H455.4" stroke="#3f9a6e" stroke-width="2.40" fill="none"/>
<path d="M434,344H455.4" stroke="#3f9a6e" stroke-width="2.40" fill="none"/>
<path d="M434,361.2H455.4" stroke="#3f9a6e" stroke-width="2.40" fill="none"/>
<path d="M535,393.8Q680,393.3 815.6,346" stroke="#f6f66a" stroke-width="2.88" fill="none"/>
<path d="M535,392.3Q680,391.8 815.6,344.5" stroke="#6ab4f4" stroke-width="2.00" fill="none"/>
<rect x="533.9" y="386.8" width="3.4" height="3.4" fill="#3f9a6e"/>
<rect x="566.5999999999999" y="389.8" width="3.4" height="3.4" fill="#3f9a6e"/>
<rect x="598.9" y="388.3" width="3.4" height="3.4" fill="#3f9a6e"/>
<rect x="631.5999999999999" y="385.6" width="3.4" height="3.4" fill="#3f9a6e"/>
<rect x="665.0" y="382.2" width="3.4" height="3.4" fill="#3f9a6e"/>
<rect x="697.5" y="375.8" width="3.4" height="3.4" fill="#3f9a6e"/>
<rect x="728.5999999999999" y="368.7" width="3.4" height="3.4" fill="#3f9a6e"/>
<rect x="759.6999999999999" y="359.7" width="3.4" height="3.4" fill="#3f9a6e"/>
<rect x="791.0999999999999" y="348.40000000000003" width="3.4" height="3.4" fill="#3f9a6e"/>
<rect x="467.8" y="195.8" width="3.4" height="3.4" fill="#3f9a6e"/>
<rect x="500.8" y="195.8" width="3.4" height="3.4" fill="#3f9a6e"/>
<rect x="533.8" y="195.8" width="3.4" height="3.4" fill="#3f9a6e"/>
<rect x="631.8" y="195.8" width="3.4" height="3.4" fill="#3f9a6e"/>
<rect x="664.8" y="195.8" width="3.4" height="3.4" fill="#3f9a6e"/>
<rect x="467.8" y="266.8" width="3.4" height="3.4" fill="#3f9a6e"/>
<path d="M429.4,192L462,265.6" stroke="#f6f66a" stroke-width="2.00" fill="none"/>
<path d="M469.6,192V219L447.5,230" stroke="#3f9a6e" stroke-width="2.64" fill="none"/>
<path d="M449,229L468,220" stroke="#6ab4f4" stroke-width="2.00" fill="none"/>
<path d="M451,228A4,4 0 0 1 459,224M459,224A4,4 0 0 1 467,220" stroke="#ffa35a" stroke-width="2.00" fill="none"/>
<path d="M443,208H457V210.5H453V213.5H447V210.5H443Z" stroke="#7a78f4" stroke-width="2.00" fill="#7a78f4"/>
<circle cx="434.5" cy="197.5" r="1.8" fill="#20a0ff"/>
<path d="M570,208Q574,240 587.5,256H620" stroke="#3f9a6e" stroke-width="2.64" fill="none"/>
<path d="M572.5,209Q576.5,238 589,253" stroke="#3f9a6e" stroke-width="2.00" fill="none"/>
<path d="M585,207V199.5H589L593,205L597,199.5H601V207M601,199.5H605L609,205L613,199.5H617V207" stroke="#ffa35a" stroke-width="2.00" fill="none"/>
<rect x="499.8" y="264.8" width="19.5" height="54.9" rx="2.5" fill="none" stroke="#6ab4f4" stroke-width="2.40"/>
<path d="M502,267.3H735M502,318H735" stroke="#3f9a6e" stroke-width="3.12" fill="none"/>
<path d="M502.5,267V318" stroke="#3f9a6e" stroke-width="2.40" fill="none"/>
<path d="M518.6,267V318" stroke="#3f9a6e" stroke-width="2.16" fill="none"/>
<path d="M533,267V318" stroke="#3f9a6e" stroke-width="2.16" fill="none"/>
<path d="M536,267V318" stroke="#3f9a6e" stroke-width="2.16" fill="none"/>
<path d="M553.2,267V318" stroke="#3f9a6e" stroke-width="2.16" fill="none"/>
<path d="M578.8,267V318" stroke="#3f9a6e" stroke-width="2.16" fill="none"/>
<path d="M595.3,267V318" stroke="#3f9a6e" stroke-width="2.16" fill="none"/>
<path d="M609.6,267V318" stroke="#3f9a6e" stroke-width="2.16" fill="none"/>
<path d="M625.3,267V318" stroke="#3f9a6e" stroke-width="2.16" fill="none"/>
<path d="M671.4,267V318" stroke="#3f9a6e" stroke-width="2.16" fill="none"/>
<path d="M697.6,267V318" stroke="#3f9a6e" stroke-width="2.16" fill="none"/>
<path d="M700.3,267V318" stroke="#3f9a6e" stroke-width="2.16" fill="none"/>
<path d="M716.6,267V318" stroke="#3f9a6e" stroke-width="2.16" fill="none"/>
<path d="M732,267V318" stroke="#3f9a6e" stroke-width="2.16" fill="none"/>
<path d="M733.7,267V318" stroke="#3f9a6e" stroke-width="2.16" fill="none"/>
<path d="M536,292.7H553.2M595.3,276.9H609.6M595.3,308.5H609.6M625.3,276.9H638M625.3,308.5H638M650,271H671" stroke="#3f9a6e" stroke-width="2.16" fill="none"/>
<path d="M597.5,280H608.5V306H597.5Z" stroke="#f00000" stroke-width="3.12" fill="none"/>
<path d="M602.8,281V305" stroke="#f00000" stroke-width="2.00" fill="none"/>
<path d="M626,278.5H637.5V305H626Z" stroke="#f00000" stroke-width="3.12" fill="none"/>
<path d="M631.8,280V304" stroke="#f00000" stroke-width="2.00" fill="none"/>
<path d="M505,281H517V308.5H505Z" stroke="#ffa35a" stroke-width="2.00" fill="#ffc090"/>
<path d="M507.5,284L513,280.5V307H507.5Z" stroke="#ff7a7a" stroke-width="2.00" fill="#ff7a7a"/>
<path d="M718.5,276.5H729.5V302.5H718.5Z" stroke="#ffa35a" stroke-width="2.00" fill="#ffc090"/>
<path d="M721,280H725.5V302H721Z" stroke="#ff7a7a" stroke-width="2.00" fill="#ff7a7a"/>
<path d="M727.5,288V290M727.5,296V298" stroke="#a05020" stroke-width="2.00" fill="none"/>
<rect x="714.8" y="264.3" width="20.7" height="55.1" rx="2.5" fill="none" stroke="#6ab4f4" stroke-width="2.16"/>
<path d="M637,264.3H672.3V319.4H637Z" stroke="#6ab4f4" stroke-width="2.00" fill="none"/>
<path d="M602.7,237.2H632.5V263.4H619.9Z" stroke="#6ab4f4" stroke-width="2.64" fill="none"/>
<path d="M606,239.5H630V260H621Z" stroke="#ff7a7a" stroke-width="2.00" fill="none"/>
<path d="M612,242H626V258H621Z" stroke="#ffa35a" stroke-width="2.00" fill="#ffb080"/>
<path d="M632.5,192V237" stroke="#3f9a6e" stroke-width="2.40" fill="none"/>
<path d="M653,272V315M660,272V315M644,282H666" stroke="#16b0f0" stroke-width="2.40" fill="none"/>
<path d="M640,300L650,310M655,305L668,298M646,312H670M642,296L652,290" stroke="#1ed040" stroke-width="2.00" fill="none"/>
<path d="M524,268A3.5,3.5 0 0 0 530,268" stroke="#ffa35a" stroke-width="2.00" fill="none"/>
<path d="M544,268A3.5,3.5 0 0 0 550,268" stroke="#ffa35a" stroke-width="2.00" fill="none"/>
<path d="M565,268A3.5,3.5 0 0 0 571,268" stroke="#ffa35a" stroke-width="2.00" fill="none"/>
<path d="M579,268A3.5,3.5 0 0 0 585,268" stroke="#ffa35a" stroke-width="2.00" fill="none"/>
<path d="M657,318A3.5,3.5 0 0 0 663,318" stroke="#ffa35a" stroke-width="2.00" fill="none"/>
<path d="M697,268A3.5,3.5 0 0 0 703,268" stroke="#ffa35a" stroke-width="2.00" fill="none"/>
<path d="M707,318A3.5,3.5 0 0 0 713,318" stroke="#ffa35a" stroke-width="2.00" fill="none"/>
<path d="M723,318A3.5,3.5 0 0 0 729,318" stroke="#ffa35a" stroke-width="2.00" fill="none"/>
<path d="M585,318A3.5,3.5 0 0 0 591,318" stroke="#ffa35a" stroke-width="2.00" fill="none"/>
<path d="M600,318A3.5,3.5 0 0 0 606,318" stroke="#ffa35a" stroke-width="2.00" fill="none"/>
<path d="M543,318A3.5,3.5 0 0 0 549,318" stroke="#ffa35a" stroke-width="2.00" fill="none"/>
<path d="M562,318A3.5,3.5 0 0 0 568,318" stroke="#ffa35a" stroke-width="2.00" fill="none"/>
<path d="M520,318A3.5,3.5 0 0 0 526,318" stroke="#ffa35a" stroke-width="2.00" fill="none"/>
<path d="M672,268A3.5,3.5 0 0 0 678,268" stroke="#ffa35a" stroke-width="2.00" fill="none"/>
<path d="M722,264A3.5,3.5 0 0 0 728,264" stroke="#ffa35a" stroke-width="2.00" fill="none"/>
<path d="M609,264A3.5,3.5 0 0 0 615,264" stroke="#ffa35a" stroke-width="2.00" fill="none"/>
<path d="M541.5,279.2H548.5V281H546.8V283.4H543.2V281H541.5Z" stroke="#7a78f4" stroke-width="2.00" fill="#7a78f4"/>
<path d="M541.5,302.2H548.5V304H546.8V306.4H543.2V304H541.5Z" stroke="#7a78f4" stroke-width="2.00" fill="#7a78f4"/>
<path d="M523.5,290.2H530.5V292H528.8V294.4H525.2V292H523.5Z" stroke="#7a78f4" stroke-width="2.00" fill="#7a78f4"/>
<path d="M563.5,290.2H570.5V292H568.8V294.4H565.2V292H563.5Z" stroke="#7a78f4" stroke-width="2.00" fill="#7a78f4"/>
<path d="M583.5,290.2H590.5V292H588.8V294.4H585.2V292H583.5Z" stroke="#7a78f4" stroke-width="2.00" fill="#7a78f4"/>
<path d="M598.5,272.2H605.5V274H603.8V276.4H600.2V274H598.5Z" stroke="#7a78f4" stroke-width="2.00" fill="#7a78f4"/>
<path d="M598.5,311.2H605.5V313H603.8V315.4H600.2V313H598.5Z" stroke="#7a78f4" stroke-width="2.00" fill="#7a78f4"/>
<path d="M628.5,272.2H635.5V274H633.8V276.4H630.2V274H628.5Z" stroke="#7a78f4" stroke-width="2.00" fill="#7a78f4"/>
<path d="M628.5,311.2H635.5V313H633.8V315.4H630.2V313H628.5Z" stroke="#7a78f4" stroke-width="2.00" fill="#7a78f4"/>
<path d="M610.5,290.2H617.5V292H615.8V294.4H612.2V292H610.5Z" stroke="#7a78f4" stroke-width="2.00" fill="#7a78f4"/>
<path d="M646.5,277.2H653.5V279H651.8V281.4H648.2V279H646.5Z" stroke="#7a78f4" stroke-width="2.00" fill="#7a78f4"/>
<path d="M646.5,290.2H653.5V292H651.8V294.4H648.2V292H646.5Z" stroke="#7a78f4" stroke-width="2.00" fill="#7a78f4"/>
<path d="M666.5,290.2H673.5V292H671.8V294.4H668.2V292H666.5Z" stroke="#7a78f4" stroke-width="2.00" fill="#7a78f4"/>
<path d="M681.5,290.2H688.5V292H686.8V294.4H683.2V292H681.5Z" stroke="#7a78f4" stroke-width="2.00" fill="#7a78f4"/>
<path d="M704.5,290.2H711.5V292H709.8V294.4H706.2V292H704.5Z" stroke="#7a78f4" stroke-width="2.00" fill="#7a78f4"/>
<path d="M721.5,271.2H728.5V273H726.8V275.4H723.2V273H721.5Z" stroke="#7a78f4" stroke-width="2.00" fill="#7a78f4"/>
<path d="M613.5,341.2H620.5V343H618.8V345.4H615.2V343H613.5Z" stroke="#7a78f4" stroke-width="2.00" fill="#7a78f4"/>
<path d="M786.9,201.2H793.9V203H792.1999999999999V205.4H788.6V203H786.9Z" stroke="#7a78f4" stroke-width="2.00" fill="#7a78f4"/>
<path d="M786.9,218.2H793.9V220H792.1999999999999V222.4H788.6V220H786.9Z" stroke="#7a78f4" stroke-width="2.00" fill="#7a78f4"/>
<path d="M786.9,235.2H793.9V237H792.1999999999999V239.4H788.6V237H786.9Z" stroke="#7a78f4" stroke-width="2.00" fill="#7a78f4"/>
<path d="M786.9,252.2H793.9V254H792.1999999999999V256.4H788.6V254H786.9Z" stroke="#7a78f4" stroke-width="2.00" fill="#7a78f4"/>
<path d="M786.9,269.2H793.9V271H792.1999999999999V273.4H788.6V271H786.9Z" stroke="#7a78f4" stroke-width="2.00" fill="#7a78f4"/>
<path d="M786.9,286.2H793.9V288H792.1999999999999V290.4H788.6V288H786.9Z" stroke="#7a78f4" stroke-width="2.00" fill="#7a78f4"/>
<path d="M441.5,277.8H448.5V279.6H446.8V282.0H443.2V279.6H441.5Z" stroke="#7a78f4" stroke-width="2.00" fill="#7a78f4"/>
<path d="M441.5,299.9H448.5V301.7H446.8V304.09999999999997H443.2V301.7H441.5Z" stroke="#7a78f4" stroke-width="2.00" fill="#7a78f4"/>
<path d="M441.5,317.2H448.5V319H446.8V321.4H443.2V319H441.5Z" stroke="#7a78f4" stroke-width="2.00" fill="#7a78f4"/>
<path d="M441.5,333.59999999999997H448.5V335.4H446.8V337.79999999999995H443.2V335.4H441.5Z" stroke="#7a78f4" stroke-width="2.00" fill="#7a78f4"/>
<path d="M441.5,350.4H448.5V352.2H446.8V354.59999999999997H443.2V352.2H441.5Z" stroke="#7a78f4" stroke-width="2.00" fill="#7a78f4"/>
<path d="M441.5,373.8H448.5V375.6H446.8V378.0H443.2V375.6H441.5Z" stroke="#7a78f4" stroke-width="2.00" fill="#7a78f4"/>
<path d="M605.5,258.2H612.5V260H610.8V262.4H607.2V260H605.5Z" stroke="#7a78f4" stroke-width="2.00" fill="#7a78f4"/>
<path d="M797.5,330.2H804.5V332H802.8V334.4H799.2V332H797.5Z" stroke="#7a78f4" stroke-width="2.00" fill="#7a78f4"/>
<path d="M455.4,286A4,4 0 0 1 455.4,294" stroke="#ffa35a" stroke-width="2.00" fill="none"/>
<path d="M455.4,321A4,4 0 0 1 455.4,329" stroke="#ffa35a" stroke-width="2.00" fill="none"/>
<path d="M455.4,356A4,4 0 0 1 455.4,364" stroke="#ffa35a" stroke-width="2.00" fill="none"/>
<path d="M779.6,198A4,4 0 0 1 779.6,206" stroke="#ffa35a" stroke-width="2.00" fill="none"/>
<path d="M779.6,232A4,4 0 0 1 779.6,240" stroke="#ffa35a" stroke-width="2.00" fill="none"/>
<path d="M779.6,266A4,4 0 0 1 779.6,274" stroke="#ffa35a" stroke-width="2.00" fill="none"/>
<path d="M779.6,286A4,4 0 0 1 779.6,294" stroke="#ffa35a" stroke-width="2.00" fill="none"/>
<path d="M788,322A4,4 0 0 1 788,330" stroke="#ffa35a" stroke-width="2.00" fill="none"/>
<circle cx="403.7" cy="430.3" r="3.2" fill="none" stroke="#a000f8" stroke-width="2.00"/>
<path d="M409,429H437M409,431.5H421" stroke="#a000f8" stroke-width="2.00" fill="none"/></g></g>
</svg>
</body></html>
